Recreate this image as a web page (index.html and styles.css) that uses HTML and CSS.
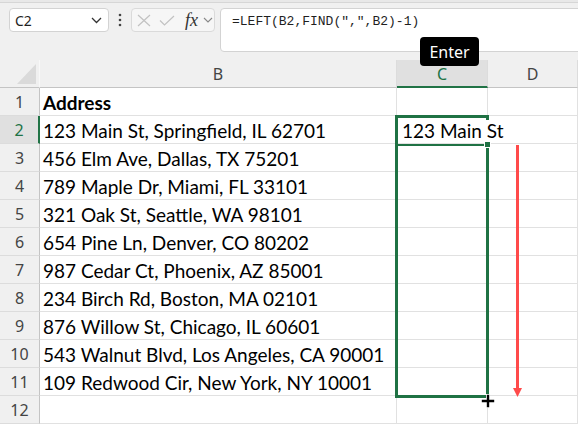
FILE: index.html
```html
<!DOCTYPE html>
<html>
<head>
  <title>Book1 - Addresses</title>
  <meta charset="UTF-8">
  <link rel="stylesheet" href="styles.css">
</head>
<body>
  <div class="window">
    <div class="ribbon-edge"></div>

    <div class="formula-bar">
      <div class="name-box">
        <span>C2</span>
        <svg width="11" height="7" viewBox="0 0 11 7"><polyline points="1,1 5.5,5.5 10,1" fill="none" stroke="#333" stroke-width="1.3"/></svg>
      </div>
      <div class="more">
        <svg width="4" height="14" viewBox="0 0 4 14"><circle cx="2" cy="2" r="1.3" fill="#444"/><circle cx="2" cy="7" r="1.3" fill="#444"/><circle cx="2" cy="12" r="1.3" fill="#444"/></svg>
      </div>
      <div class="fx-group">
        <svg class="cancel" width="14" height="13" viewBox="0 0 14 13"><path d="M1 1 L13 12 M13 1 L1 12" stroke="#c2c2c2" stroke-width="1.2" fill="none"/></svg>
        <svg class="confirm" width="16" height="11" viewBox="0 0 16 11"><polyline points="1,5.5 5.5,10 15,1" fill="none" stroke="#c2c2c2" stroke-width="1.2"/></svg>
        <span class="fx">fx</span>
        <svg width="10" height="6" viewBox="0 0 10 6"><polyline points="1,1 5,5 9,1" fill="none" stroke="#888" stroke-width="1.1"/></svg>
      </div>
      <div class="formula-input">=LEFT(B2,FIND(",",B2)-1)</div>
    </div>

    <div class="sheet">
      <div class="head corner"><div class="corner-mark"></div></div>
      <div class="head col">B</div>
      <div class="head col active">C</div>
      <div class="head col">D</div>

      <div class="head row">1</div>
      <div class="cell bold">Address</div>
      <div class="cell"></div>
      <div class="cell"></div>

      <div class="head row active">2</div>
      <div class="cell">123 Main St, Springfield, IL 62701</div>
      <div class="cell"><span class="overflow">123 Main St</span></div>
      <div class="cell"></div>

      <div class="head row">3</div>
      <div class="cell">456 Elm Ave, Dallas, TX 75201</div>
      <div class="cell"></div>
      <div class="cell"></div>

      <div class="head row">4</div>
      <div class="cell">789 Maple Dr, Miami, FL 33101</div>
      <div class="cell"></div>
      <div class="cell"></div>

      <div class="head row">5</div>
      <div class="cell">321 Oak St, Seattle, WA 98101</div>
      <div class="cell"></div>
      <div class="cell"></div>

      <div class="head row">6</div>
      <div class="cell">654 Pine Ln, Denver, CO 80202</div>
      <div class="cell"></div>
      <div class="cell"></div>

      <div class="head row">7</div>
      <div class="cell">987 Cedar Ct, Phoenix, AZ 85001</div>
      <div class="cell"></div>
      <div class="cell"></div>

      <div class="head row">8</div>
      <div class="cell">234 Birch Rd, Boston, MA 02101</div>
      <div class="cell"></div>
      <div class="cell"></div>

      <div class="head row">9</div>
      <div class="cell">876 Willow St, Chicago, IL 60601</div>
      <div class="cell"></div>
      <div class="cell"></div>

      <div class="head row">10</div>
      <div class="cell">543 Walnut Blvd, Los Angeles, CA 90001</div>
      <div class="cell"></div>
      <div class="cell"></div>

      <div class="head row">11</div>
      <div class="cell">109 Redwood Cir, New York, NY 10001</div>
      <div class="cell"></div>
      <div class="cell"></div>

      <div class="head row">12</div>
      <div class="cell"></div>
      <div class="cell"></div>
      <div class="cell"></div>
    </div>

    <!-- overlays -->
    <div class="tooltip">Enter</div>

    <div class="selection">
      <div class="active-cell"></div>
      <div class="fill-handle"></div>
    </div>

    <svg class="drag-arrow" width="11" height="253" viewBox="0 0 11 253">
      <line x1="5.5" y1="0" x2="5.5" y2="245" stroke="#ff4a4a" stroke-width="3"/>
      <polygon points="1,243 10,243 5.5,252" fill="#ff4a4a"/>
    </svg>

    <svg class="cursor" width="14" height="14" viewBox="0 0 14 14">
      <path d="M5 0 H9 V5 H14 V9 H9 V14 H5 V9 H0 V5 H5 Z" fill="#fff"/>
      <path d="M5.8 0.8 H8.2 V5.8 H13.2 V8.2 H8.2 V13.2 H5.8 V8.2 H0.8 V5.8 H5.8 Z" fill="#000"/>
    </svg>
  </div>
</body>
</html>
```

FILE: styles.css
```css
* {
  margin: 0;
  padding: 0;
  box-sizing: border-box;
}

body {
  font-family: "Noto Sans", "Open Sans", sans-serif;
  background: #f0f0f0;
  color: #222;
}

.window {
  position: relative;
  width: 578px;
  height: 424px;
  overflow: hidden;
}

.ribbon-edge {
  height: 3px;
  background: #e8e8e8;
  border-bottom: 1px solid #d6d6d6;
}

/* Formula bar */
.formula-bar {
  display: flex;
  align-items: flex-start;
  height: 57px;
  padding: 5px 0 0 9px;
}

.name-box {
  width: 100px;
  height: 24px;
  background: #fff;
  border: 1px solid #d3d3d3;
  border-radius: 4px;
  display: flex;
  align-items: center;
  justify-content: space-between;
  padding: 0 6px 0 5px;
  font-size: 14px;
  color: #1f1f1f;
}

.more {
  width: 22px;
  height: 24px;
  display: flex;
  align-items: center;
  justify-content: center;
}

.fx-group {
  width: 84px;
  height: 24px;
  border: 1px solid #dadada;
  border-radius: 4px;
  background: #f6f6f6;
  display: flex;
  align-items: center;
  padding: 0 0 0 5px;
}

.fx-group .confirm {
  margin-left: 8px;
}

.fx-group .fx {
  margin-left: 10px;
  margin-right: 5px;
  font-family: "Liberation Serif", serif;
  font-style: italic;
  font-size: 18px;
  color: #333;
  line-height: 1;
}

.formula-input {
  flex: 1;
  margin-left: 5px;
  margin-right: -12px;
  height: 44px;
  background: #fff;
  border: 1px solid #d3d3d3;
  border-radius: 4px;
  padding: 5px 0 0 11px;
  font-family: "Liberation Mono", monospace;
  font-size: 13px;
  color: #1f1f1f;
}

/* Grid */
.sheet {
  display: grid;
  grid-template-columns: 40px 357px 91px 90px;
  grid-auto-rows: 28px;
}

.head {
  background: #f0f0f0;
  color: #444;
  font-size: 16px;
  display: flex;
  align-items: center;
  justify-content: center;
  padding-top: 1px;
}

.head.col {
  border-right: 1px solid #dcdcdc;
  border-bottom: 1px solid #c4c4c4;
}

.head.row {
  border-right: 1px solid #c4c4c4;
  border-bottom: 1px solid #dcdcdc;
}

.head.col.active {
  background: #e0e0e0;
  color: #217346;
  border-bottom: 2px solid #217346;
}

.head.row.active {
  background: #e0e0e0;
  color: #217346;
  border-right: 2px solid #217346;
}

.corner {
  border-right: 1px solid #f8f8f8;
  border-bottom: 1px solid #c4c4c4;
  align-items: flex-end;
  justify-content: flex-end;
  padding: 0 3px 3px 0;
}

.corner-mark {
  width: 19px;
  height: 20px;
  background: #dadada;
  clip-path: polygon(100% 0, 100% 100%, 0 100%);
}

.cell {
  background: #fff;
  border-right: 1px solid #e1e1e1;
  border-bottom: 1px solid #e1e1e1;
  font-family: Lato, "Liberation Sans", sans-serif;
  font-size: 19px;
  color: #000;
  padding: 1px 0 0 3px;
  display: flex;
  align-items: center;
  white-space: nowrap;
}

.cell.bold {
  font-weight: 700;
}

.cell .overflow {
  position: relative;
  z-index: 3;
  margin-left: 2px;
  background: #fff;
  line-height: 21px;
}

/* Overlays */
.tooltip {
  position: absolute;
  left: 420px;
  top: 37px;
  width: 59px;
  height: 29px;
  background: #000;
  color: #fff;
  border-radius: 4px;
  font-size: 16px;
  display: flex;
  align-items: center;
  justify-content: center;
}

.selection {
  position: absolute;
  left: 395px;
  top: 115px;
  width: 94px;
  height: 283px;
  border: 3px solid #1f7244;
  z-index: 2;
}

.active-cell {
  height: 28px;
  border-bottom: 2px solid #1f7244;
}

.fill-handle {
  position: absolute;
  right: -5px;
  top: 23px;
  width: 7px;
  height: 7px;
  background: #1f7244;
  border: 1px solid #fff;
}

.drag-arrow {
  position: absolute;
  left: 512px;
  top: 145px;
}

.cursor {
  position: absolute;
  left: 481px;
  top: 394px;
  z-index: 4;
}
```
